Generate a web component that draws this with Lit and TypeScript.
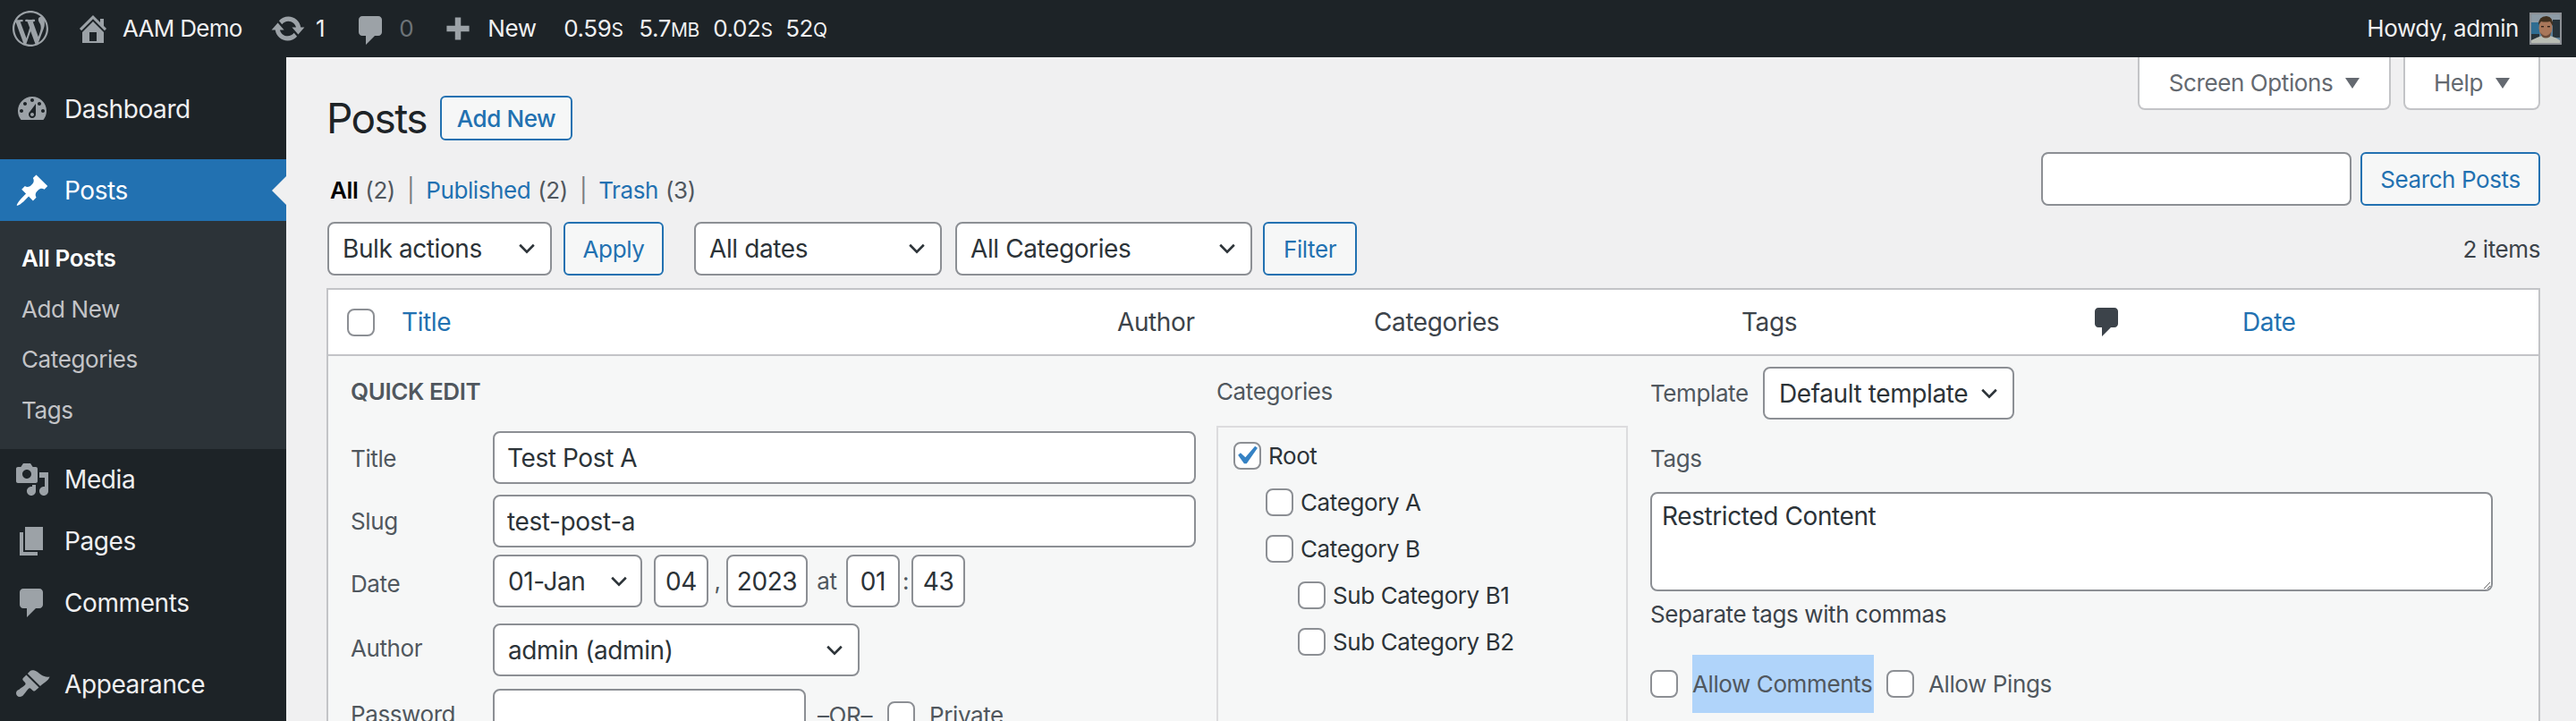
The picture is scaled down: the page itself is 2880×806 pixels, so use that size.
import { LitElement, html, css, svg } from "lit";
import { customElement } from "lit/decorators.js";

const P: Record<string, string> = {
  wp: "M20 10c0-5.51-4.49-10-10-10C4.48 0 0 4.49 0 10c0 5.52 4.48 10 10 10 5.51 0 10-4.48 10-10zM7.78 15.37L4.37 6.22c.55-.02 1.17-.08 1.17-.08.5-.06.44-1.13-.06-1.11 0 0-1.45.11-2.37.11-.18 0-.37 0-.58-.01C4.12 2.69 6.87 1.11 10 1.11c2.33 0 4.45.87 6.05 2.34-.68-.11-1.65.39-1.65 1.58 0 .74.45 1.36.9 2.1.35.61.55 1.36.55 2.46 0 1.49-1.4 5-1.4 5l-3.03-8.37c.54-.02.82-.17.82-.17.5-.05.44-1.25-.06-1.22 0 0-1.44.12-2.38.12-.87 0-2.33-.12-2.33-.12-.5-.03-.56 1.2-.06 1.22l.92.08 1.26 3.41zM17.41 10c.24-.64.74-1.87.43-4.25.7 1.29 1.05 2.71 1.05 4.25 0 3.29-1.73 6.24-4.4 7.78.97-2.59 1.94-5.2 2.92-7.78zM6.1 18.09C3.12 16.65 1.11 13.53 1.11 10c0-1.3.23-2.48.72-3.59C3.25 10.3 4.67 14.2 6.1 18.09zm4.03-6.63l2.58 6.98c-.86.29-1.76.45-2.71.45-.79 0-1.57-.11-2.29-.33.81-2.38 1.62-4.74 2.42-7.1z",
  home: "M16 8.5l1.53 1.53-1.06 1.06L10 4.62l-6.47 6.47-1.06-1.06L10 2.5l4 4v-2h2v4zm-6-2.46l6 5.99V18H4v-5.97zM12 17v-5H8v5h4z",
  update: "M10.2 3.28c3.53 0 6.43 2.61 6.92 6h2.08l-3.5 4-3.5-4h2.32c-.45-1.97-2.21-3.45-4.32-3.45-1.45 0-2.73.71-3.54 1.78L4.95 5.66C6.23 4.2 8.11 3.28 10.2 3.28zm-.4 13.44c-3.52 0-6.43-2.61-6.92-6H.8l3.5-4c1.17 1.33 2.33 2.67 3.5 4H5.48c.45 1.97 2.21 3.45 4.32 3.45 1.45 0 2.73-.71 3.54-1.78l1.71 1.95c-1.28 1.46-3.15 2.38-5.25 2.38z",
  comment: "M5 2h9c1.1 0 2 .9 2 2v7c0 1.1-.9 2-2 2h-2l-5 5v-5H5c-1.1 0-2-.9-2-2V4c0-1.1.9-2 2-2z",
  plus: "M8.2 3h3.6v5.2H17v3.6h-5.2V17H8.2v-5.2H3V8.2h5.2z",
  dash: "M3.76 16h12.48c1.1-1.37 1.76-3.11 1.76-5 0-4.42-3.58-8-8-8s-8 3.58-8 8c0 1.89.66 3.63 1.76 5zM10 4c.55 0 1 .45 1 1s-.45 1-1 1-1-.45-1-1 .45-1 1-1zM6 6c.55 0 1 .45 1 1s-.45 1-1 1-1-.45-1-1 .45-1 1-1zm8 0c.55 0 1 .45 1 1s-.45 1-1 1-1-.45-1-1 .45-1 1-1zm-5.37 5.55L12 7v6c0 1.1-.9 2-2 2s-2-.9-2-2c0-.57.24-1.08.63-1.45zM4 10c.55 0 1 .45 1 1s-.45 1-1 1-1-.45-1-1 .45-1 1-1zm12 0c.55 0 1 .45 1 1s-.45 1-1 1-1-.45-1-1 .45-1 1-1zm-5 3c0-.55-.45-1-1-1s-1 .45-1 1 .45 1 1 1 1-.45 1-1z",
  pin: "M10.44 3.02l1.82-1.82 6.36 6.35-1.83 1.82c-1.05-.68-2.48-.57-3.41.36l-.75.75c-.92.93-1.04 2.35-.35 3.41l-1.83 1.82-2.41-2.41-2.8 2.79c-.42.42-3.38 2.71-3.8 2.29s1.86-3.39 2.28-3.81l2.79-2.79L4.1 9.36l1.83-1.82c1.05.69 2.48.57 3.4-.36l.75-.75c.93-.92 1.05-2.35.36-3.41z",
  media: "M13 11V4c0-.55-.45-1-1-1h-1.67L9 1H5L3.67 3H2c-.55 0-1 .45-1 1v7c0 .55.45 1 1 1h10c.55 0 1-.45 1-1zM7 4.5c1.38 0 2.5 1.12 2.5 2.5S8.38 9.5 7 9.5 4.5 8.38 4.5 7 5.62 4.5 7 4.5zM14 6h5v10.5c0 1.38-1.12 2.5-2.5 2.5S14 17.88 14 16.5s1.12-2.5 2.5-2.5c.17 0 .34.02.5.05V9h-3V6zm-4 8.05V13h2v3.5c0 1.38-1.12 2.5-2.5 2.5S7 17.88 7 16.5 8.12 14 9.5 14c.17 0 .34.02.5.05z",
  page: "M6 15V2h10v13H6zm-1 1h8v2H3V5h2v11z",
  brush: "M14.48 11.06L7.41 3.99l1.5-1.5c.5-.56 2.3-.47 3.51.32 1.21.8 1.43 1.28 2.91 2.1 1.18.64 2.45 1.26 4.45.85-.2.9-1.3 2.3-2.6 3.1-1 .6-1.7 1.2-2.7 2.2zm-.71.71L6.7 4.7 4.93 6.47c-.39.39-.39 1.02 0 1.41l1.06 1.06c.39.39.39 1.03 0 1.42-.6.6-1.43 1.11-2.21 1.69-.35.26-.7.53-1.01.84C1.43 13.23 1 14.08 1 15c0 1.1.9 2 2 2 .92 0 1.77-.43 2.34-1.34.31-.31.58-.66.84-1.01.58-.78 1.09-1.61 1.69-2.21.39-.39 1.03-.39 1.42 0l1.06 1.06c.39.39 1.02.39 1.41 0z",
};

const icon = (name: string) => html`<svg class="ic" viewBox="0 0 20 20"><path d=${P[name]}></path></svg>`;
const chev = html`<svg class="chev" viewBox="0 0 20 20"><path d="M3.5 6.5 10 13l6.5-6.5" fill="none" stroke="currentColor" stroke-width="2.2"></path></svg>`;
const sel = (text: string, cls: string) => html`<div class="sel ${cls}"><span>${text}</span>${chev}</div>`;
const avatar = svg`
  <rect width="32" height="32" fill="#5a7f98"></rect>
  <rect x="0" y="0" width="32" height="9" fill="#8d9ba6"></rect>
  <rect x="0" y="9" width="9" height="14" fill="#2f6d92"></rect>
  <rect x="24" y="6" width="8" height="20" fill="#27333a"></rect>
  <rect x="0" y="22" width="9" height="10" fill="#263238"></rect>
  <path d="M0 32 L0 29 Q8 25 12 24 L21 24 Q28 26 32 29 L32 32Z" fill="#b9bdb4"></path>
  <ellipse cx="16" cy="15" rx="7.5" ry="10" fill="#a9775a"></ellipse>
  <path d="M8 12 Q8 2 17 2 Q25 3 24 13 L21 8 Q15 9 11 8Z" fill="#40301f"></path>
  <path d="M10 20 Q16 28 22 20 L21 25 Q16 28 12 25Z" fill="#6a4a38"></path>
  <rect x="11" y="13" width="3" height="1.4" fill="#33231a"></rect>
  <rect x="18" y="13" width="3" height="1.4" fill="#33231a"></rect>`;

@customElement("app-root")
export class AppRoot extends LitElement {
  static styles = css`
    :host { display: block; width: 2880px; height: 806px; overflow: hidden; background: #f0f0f1; font-family: Inter, "Liberation Sans", sans-serif; font-size: 26px; color: #3c434a; letter-spacing: -0.4px; }
    * { box-sizing: border-box; }
    .ic { width: 40px; height: 40px; flex: none; fill: #9ca2a7; display: block; }

    .bar { height: 64px; background: #1d2327; color: #f0f0f1; display: flex; align-items: center; line-height: 1; }
    .logo { margin-left: 14px; }
    .home { margin-left: 30px; }
    .site { margin-left: 13px; width: 134px; white-space: nowrap; letter-spacing: -0.7px; }
    .upd { margin-left: 31px; }
    .n1 { margin-left: 11px; }
    .cm { margin-left: 32px; margin-top: 4px; }
    .n0 { margin-left: 11px; color: #6d7378; }
    .pl { margin-left: 32px; width: 36px; height: 36px; }
    .new { margin-left: 15px; width: 85px; }
    .st { width: 84px; white-space: nowrap; }
    .st.w2 { width: 83px; }
    .st.w3 { width: 81px; }
    .st small { font-size: 21px; }
    .howdy { margin-left: auto; }
    .ava { width: 36px; height: 36px; margin: 0 16px 0 12px; border: 2px solid #8c8f94; display: block; flex: none; }

    .wrap { display: flex; height: 742px; }
    .side { width: 320px; flex: none; background: #1d2327; padding-top: 24px; font-size: 28px; color: #f0f0f1; }
    .item { height: 68px; display: flex; align-items: center; gap: 16px; padding-left: 16px; position: relative; }
    .item.tall { height: 70px; }
    .item.cur { height: 69px; margin-top: 22px; background: #2271b1; color: #fff; }
    .item.cur .ic { fill: #fff; }
    .item.cur::after { content: ""; position: absolute; right: 0; top: 50%; margin-top: -16px; border: 16px solid transparent; border-left-width: 0; border-right-color: #f0f0f1; }
    .item.sep { margin-top: 23px; }
    .subm { background: #2c3338; padding: 14px 0 14px 24px; font-size: 26px; color: #c3c4c7; line-height: 56.5px; height: 255px; }
    .subm b { color: #fff; font-weight: 600; display: block; }
    .subm div { height: 56.5px; }

    .main { flex: 1; min-width: 0; padding: 0 40px 0 45px; }
    .top { display: flex; justify-content: space-between; height: 184px; }
    .left { padding-top: 43px; }
    .h { display: flex; align-items: center; height: 50px; }
    h1 { margin: 0; width: 127px; font-size: 46px; font-weight: 400; color: #1d2327; letter-spacing: -1.6px; }
    .btn { display: flex; align-items: center; justify-content: center; height: 60px; border: 2px solid #2271b1; border-radius: 6px; background: #f6f7f7; color: #2271b1; font-size: 26px; flex: none; }
    .add { height: 50px; width: 148px; font-weight: 500; }
    .views { margin-top: 36px; line-height: 40px; color: #50575e; display: flex; padding-left: 4px; }
    .views b { color: #000; font-weight: 600; }
    .views a { color: #2271b1; }
    .views i { font-style: normal; margin: 0 13px; color: #787c82; }
    .views span { margin-left: 8px; }
    .right { display: flex; flex-direction: column; align-items: flex-end; }
    .tabs { display: flex; gap: 14px; }
    .tab { height: 59px; background: #fff; border: 2px solid #c3c4c7; border-top: 0; border-radius: 0 0 8px 8px; color: #646970; display: flex; align-items: center; justify-content: center; gap: 14px; }
    .tab.so { width: 283px; }
    .tab.he { width: 153px; }
    .tab svg { width: 16px; height: 12px; fill: #646970; }
    .search { display: flex; gap: 10px; margin-top: 47px; }
    .inp { height: 60px; border: 2px solid #8c8f94; border-radius: 8px; background: #fff; color: #2c3338; font: inherit; font-size: 28px; letter-spacing: -0.4px; padding: 0 14px; outline: none; display: block; }
    .inp.s { width: 347px; }
    .sbtn { width: 201px; }

    .filters { display: flex; height: 60px; align-items: center; font-size: 28px; }
    .sel { height: 60px; border: 2px solid #8c8f94; border-radius: 8px; background: #fff; color: #2c3338; font-size: 28px; display: flex; align-items: center; justify-content: space-between; padding: 0 14px 0 15px; flex: none; }
    .chev { width: 24px; height: 24px; color: #2c3338; flex: none; }
    .bulk { width: 251px; margin-left: 1px; }
    .apply { width: 112px; margin-left: 13px; }
    .dates { width: 277px; margin-left: 34px; }
    .cats { width: 332px; margin-left: 15px; }
    .filt { width: 105px; margin-left: 12px; }
    .count { margin-left: auto; font-size: 26px; color: #3c434a; }

    .table { margin-top: 14px; border: 2px solid #c3c4c7; background: #f6f7f7; height: 600px; }
    .thead { height: 74px; background: #fff; border-bottom: 2px solid #c3c4c7; display: grid; grid-template-columns: 82px 800px 287px 411px 389px 171px 1fr; align-items: center; font-size: 28px; color: #3c434a; }
    .thead a { color: #2271b1; }
    .thead .ic { fill: #3c434a; }
    .ck { padding-left: 21px; display: flex; }
    input[type="checkbox"] { appearance: none; -webkit-appearance: none; width: 31px; height: 31px; margin: 0; border: 2px solid #8c8f94; border-radius: 8px; background: #fff; position: relative; flex: none; display: block; }
    input[type="checkbox"]:checked::before { content: ""; position: absolute; left: -9px; top: -7px; width: 42px; height: 42px; background: #3582c4; clip-path: polygon(74.15% 24.45%, 80.85% 29.15%, 51.8% 71.05%, 45.1% 71.05%, 28.9% 48.35%, 35.6% 42.1%, 48.45% 54.1%); }

    .qe { display: flex; }
    .c1 { width: 970px; padding: 20px 0 0 25px; flex: none; }
    .legend { line-height: 40px; font-size: 26px; font-weight: 600; color: #50575e; }
    .form { margin-top: 24px; display: grid; grid-template-columns: 159px 786px; grid-template-rows: 71px 67px 77px 72px 60px; color: #50575e; font-size: 26px; }
    .lab { line-height: 60px; }
    .lab.t { margin-top: 1px; }
    .lab.d { margin-top: 3px; }
    .lab.a { margin-top: -2px; }
    .form .inp { width: 100%; height: 59px; }
    .form .sel { height: 59px; }
    .dt { display: flex; align-items: center; height: 59px; font-size: 26px; }
    .sep2 { text-align: center; flex: none; }
    .w13 { width: 13px; } .w20 { width: 20px; } .w43 { width: 43px; }
    .form .dt .inp { padding: 0; text-align: center; flex: none; }
    .form .dt .dd { width: 61px; } .form .dt .yy { width: 91px; } .form .dt .hh { width: 60px; }
    .mon { width: 167px; padding-right: 12px; }
    .auth { width: 410px; }
    .pw { display: flex; align-items: center; height: 60px; font-size: 26px; }
    .form .pw .inp { width: 350px; flex: none; }
    .pw span { margin-left: 13px; width: 78px; }
    .pw label { margin-left: 16px; }

    .c2 { width: 460px; margin: 0 25px 0 23px; padding-top: 20px; flex: none; }
    .c2 .t { line-height: 40px; color: #50575e; font-size: 26px; }
    .box { margin-top: 18px; height: 400px; border: 2px solid #dcdcde; padding: 5px 0 0 17px; color: #2c3338; }
    .r { height: 52px; display: flex; align-items: center; gap: 8px; }
    .r.l1 { padding-left: 36px; }
    .r.l2 { padding-left: 72px; }

    .c3 { width: 942px; flex: none; padding-top: 12px; color: #50575e; }
    .tpl { display: flex; align-items: center; gap: 17px; }
    .tpl > span { width: 109px; white-space: nowrap; }
    .tpl .sel { width: 281px; padding: 0 14px 0 16px; height: 59px; }
    .tags { margin-top: 24px; line-height: 40px; }
    textarea { margin-top: 17px; display: block; width: 942px; height: 111px; border: 2px solid #8c8f94; border-radius: 8px; background: #fff; padding: 5px 11px; font: inherit; font-size: 28px; line-height: 40px; letter-spacing: -0.4px; color: #2c3338; outline: none; }
    .hint { margin-top: 6px; line-height: 40px; color: #3c434a; }
    .opts { margin-top: 25px; height: 65px; display: flex; align-items: center; }
    .hl { height: 65px; width: 203px; background: #b0d4fa; display: flex; align-items: center; margin: 0 14px 0 16px; }
    .opts label { margin-left: 16px; }
  `;

  render() {
    return html`
      <div class="bar">
        <span class="logo">${icon("wp")}</span>
        <span class="home">${icon("home")}</span>
        <span class="site">AAM Demo</span>
        <span class="upd">${icon("update")}</span>
        <span class="n1">1</span>
        <span class="cm">${icon("comment")}</span>
        <span class="n0">0</span>
        <svg class="ic pl" viewBox="0 0 20 20"><path d=${P.plus}></path></svg>
        <span class="new">New</span>
        <span class="st">0.59<small>S</small></span>
        <span class="st w2">5.7<small>MB</small></span>
        <span class="st w3">0.02<small>S</small></span>
        <span class="st">52<small>Q</small></span>
        <span class="howdy">Howdy, admin</span>
        <svg class="ava" viewBox="0 0 32 32">${avatar}</svg>
      </div>
      <div class="wrap">
        <nav class="side">
          <div class="item">${icon("dash")}<span>Dashboard</span></div>
          <div class="item cur">${icon("pin")}<span>Posts</span></div>
          <div class="subm"><b>All Posts</b><div>Add New</div><div>Categories</div><div>Tags</div></div>
          <div class="item">${icon("media")}<span>Media</span></div>
          <div class="item tall">${icon("page")}<span>Pages</span></div>
          <div class="item">${icon("comment")}<span>Comments</span></div>
          <div class="item sep">${icon("brush")}<span>Appearance</span></div>
        </nav>
        <main class="main">
          <div class="top">
            <div class="left">
              <div class="h"><h1>Posts</h1><div class="btn add">Add New</div></div>
              <div class="views"><b>All</b><span>(2)</span><i>|</i><a>Published</a><span>(2)</span><i>|</i><a>Trash</a><span>(3)</span></div>
            </div>
            <div class="right">
              <div class="tabs">
                <div class="tab so">Screen Options <svg viewBox="0 0 16 12"><path d="M0 0h16L8 12z"></path></svg></div>
                <div class="tab he">Help <svg viewBox="0 0 16 12"><path d="M0 0h16L8 12z"></path></svg></div>
              </div>
              <div class="search"><input class="inp s" /><div class="btn sbtn">Search Posts</div></div>
            </div>
          </div>
          <div class="filters">
            ${sel("Bulk actions", "bulk")}
            <div class="btn apply">Apply</div>
            ${sel("All dates", "dates")}
            ${sel("All Categories", "cats")}
            <div class="btn filt">Filter</div>
            <span class="count">2 items</span>
          </div>
          <div class="table">
            <div class="thead">
              <div class="ck"><input type="checkbox" /></div>
              <a>Title</a><span>Author</span><span>Categories</span><span>Tags</span>
              <span>${icon("comment")}</span><a>Date</a>
            </div>
            <div class="qe">
              <div class="c1">
                <div class="legend">QUICK EDIT</div>
                <div class="form">
                  <div class="lab t">Title</div><input class="inp" value="Test Post A" />
                  <div class="lab">Slug</div><input class="inp" value="test-post-a" />
                  <div class="lab d">Date</div>
                  <div class="dt">
                    ${sel("01-Jan", "mon")}
                    <span class="sep2 w13"></span>
                    <input class="inp dd" value="04" />
                    <span class="sep2 w20">,</span>
                    <input class="inp yy" value="2023" />
                    <span class="sep2 w43">at</span>
                    <input class="inp hh" value="01" />
                    <span class="sep2 w13">:</span>
                    <input class="inp hh" value="43" />
                  </div>
                  <div class="lab a">Author</div>
                  <div>${sel("admin (admin)", "auth")}</div>
                  <div class="lab">Password</div>
                  <div class="pw"><input class="inp" /><span>–OR–</span><input type="checkbox" /><label>Private</label></div>
                </div>
              </div>
              <div class="c2">
                <div class="t">Categories</div>
                <div class="box">
                  <div class="r"><input type="checkbox" checked /><span>Root</span></div>
                  <div class="r l1"><input type="checkbox" /><span>Category A</span></div>
                  <div class="r l1"><input type="checkbox" /><span>Category B</span></div>
                  <div class="r l2"><input type="checkbox" /><span>Sub Category B1</span></div>
                  <div class="r l2"><input type="checkbox" /><span>Sub Category B2</span></div>
                </div>
              </div>
              <div class="c3">
                <div class="tpl"><span>Template</span>${sel("Default template", "")}</div>
                <div class="tags">Tags</div>
                <textarea>Restricted Content</textarea>
                <div class="hint">Separate tags with commas</div>
                <div class="opts">
                  <input type="checkbox" />
                  <span class="hl">Allow Comments</span>
                  <input type="checkbox" />
                  <label>Allow Pings</label>
                </div>
              </div>
            </div>
          </div>
        </main>
      </div>
    `;
  }
}
